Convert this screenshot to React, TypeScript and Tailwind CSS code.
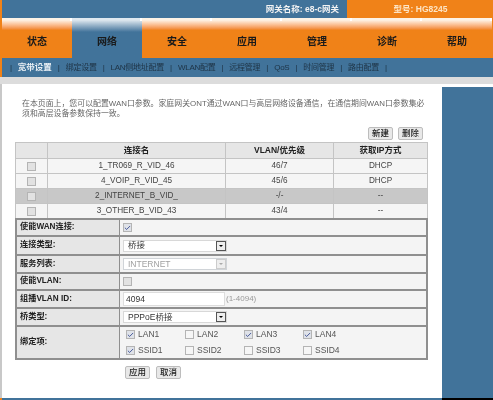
import { Check } from 'lucide-react';

const tabs = ['状态', '网络', '安全', '应用', '管理', '诊断', '帮助'];
const subTabs = ['宽带设置', '绑定设置', 'LAN侧地址配置', 'WLAN配置', '远程管理', 'QoS', '时间管理', '路由配置'];

const connections = [
  { name: '1_TR069_R_VID_46', vlan: '46/7', mode: 'DHCP' },
  { name: '4_VOIP_R_VID_45', vlan: '45/6', mode: 'DHCP' },
  { name: '2_INTERNET_B_VID_', vlan: '-/-', mode: '--', selected: true },
  { name: '3_OTHER_B_VID_43', vlan: '43/4', mode: '--' },
];

const bindings = [
  { label: 'LAN1', on: true },
  { label: 'LAN2', on: false },
  { label: 'LAN3', on: true },
  { label: 'LAN4', on: true },
  { label: 'SSID1', on: true },
  { label: 'SSID2', on: false },
  { label: 'SSID3', on: false },
  { label: 'SSID4', on: false },
];

function Box({ on, fill }: { on?: boolean; fill?: boolean }) {
  return (
    <span className={`flex h-[9px] w-[9px] shrink-0 items-center justify-center border border-[#b4b4b4] ${on ? 'bg-[#dfe2e8]' : fill ? 'bg-[#e2e2e2]' : 'bg-[#f6f6f6]'}`}>
      {on && <Check className="h-2 w-2 text-[#33478f]" strokeWidth={3} />}
    </span>
  );
}

function Btn({ label }: { label: string }) {
  return (
    <span className="flex h-[13px] w-[25px] items-center justify-center rounded-[2px] border border-[#bdbdbd] bg-[#e8e8e8] text-[8.5px] font-medium text-[#222222]">
      {label}
    </span>
  );
}

function Select({ value, disabled }: { value: string; disabled?: boolean }) {
  return (
    <div className={`flex h-3 w-[104px] items-center border bg-white pl-1 text-[8.5px] ${disabled ? 'border-[#d0d4d8] text-[#a0a0a0]' : 'border-[#d8d8d8] text-[#333333]'}`}>
      <span className="flex-1">{value}</span>
      <span className={`flex h-[10px] w-[10px] items-center justify-center border ${disabled ? 'border-[#cccccc]' : 'border-[#555555]'} bg-[#eeeeee]`}>
        <span className={`h-0 w-0 border-x-[2.5px] border-t-[2.5px] border-x-transparent ${disabled ? 'border-t-[#aaaaaa]' : 'border-t-black'}`} />
      </span>
    </div>
  );
}

function FormRow({ label, h, children }: { label: string; h: string; children: React.ReactNode }) {
  return (
    <div className={`flex ${h} border-b-2 border-[#8f8f8f]`}>
      <div className="flex w-[103px] shrink-0 items-center border-r border-[#8f8f8f] bg-[#e6e6e6] pl-[3px] text-[8.2px] font-bold text-[#222222]">
        {label}
      </div>
      <div className="flex flex-1 items-center bg-[#f4f4f4] pl-[3px]">{children}</div>
    </div>
  );
}

export default function App() {
  return (
    <div className="flex h-[400px] w-[493px] flex-col overflow-hidden bg-[#f08218] blur-[0.45px] [font-family:'Liberation_Sans','Noto_Sans_CJK_SC',sans-serif]">
      {/* top bar */}
      <div className="ml-[2px] flex h-[18px] shrink-0">
        <div className="w-[345px] bg-[#41739a] pr-2 text-right text-[8.5px] font-bold leading-[18px] text-[#f2f2f2]">
          网关名称: e8-c网关
        </div>
        <div className="flex-1 bg-[#f08218] pl-[1px] text-center text-[8.5px] font-bold leading-[18px] text-[#fde4c4]">
          型号: HG8245
        </div>
      </div>

      {/* main nav */}
      <div className="ml-[2px] flex h-[40px] shrink-0 bg-[#f08218]">
        {tabs.map((t, i) => (
          <div
            key={t}
            className={`relative flex w-[70px] items-center justify-center pt-[7px] text-[10px] font-bold text-[#1a1a1a] ${
              i === 1
                ? 'bg-linear-to-b from-[#dfe8ef] from-[2px] via-[#41739a] via-[14px] to-[#41739a]'
                : 'bg-linear-to-b from-[#fdf3e6] from-[2px] via-[#f08218] via-[12px] to-[#f08218]'
            }`}
          >
            {t}
            <span className="absolute right-0 top-0 h-[3px] w-[2px] bg-white" />
          </div>
        ))}
      </div>

      {/* sub nav */}
      <div className="ml-[2px] flex h-[19px] shrink-0 items-center bg-[#41739a] pl-[8px] text-[8px] tracking-[-0.25px] text-[#1e3345]">
        <span className="mr-[6px]">|</span>
        {subTabs.map((t, i) => (
          <span key={t} className="flex items-center">
            <span className={i === 0 ? 'text-[8.5px] font-bold tracking-normal text-[#e8eef3]' : ''}>{t}</span>
            <span className="mx-[6px]">|</span>
          </span>
        ))}
      </div>

      <div className="h-[7px] shrink-0 bg-[#dcdcdc]" />

      {/* content */}
      <div className="flex h-[314px] shrink-0 border-l-2 border-[#c8c8c8] bg-white">
        <div className="w-[440px] shrink-0 px-[13px] pt-[15px]">
          <p className="pl-[7px] text-[7.9px] leading-[10px] text-[#666666]">
            在本页面上，您可以配置WAN口参数。家庭网关ONT通过WAN口与高层网络设备通信，在通信期间WAN口参数集必须和高层设备参数保持一致。
          </p>
          <div className="mt-[8px] flex justify-end gap-[5px] pr-[6px]">
            <Btn label="新建" />
            <Btn label="删除" />
          </div>

          <div className="mt-[2px] w-[413px] border border-[#c4c4c4] text-center text-[8.2px] text-[#444444]">
            <div className="grid h-[15px] grid-cols-[32px_178px_108px_1fr] items-stretch bg-[#e6e6e6] text-[8.5px] font-bold leading-[15px] text-[#222222]">
              <span className="border-r border-[#c4c4c4]" />
              <span className="border-r border-[#c4c4c4]">连接名</span>
              <span className="border-r border-[#c4c4c4]">VLAN/优先级</span>
              <span>获取IP方式</span>
            </div>
            {connections.map((c) => (
              <div
                key={c.name}
                className={`grid h-[15px] grid-cols-[32px_178px_108px_1fr] border-t border-[#c4c4c4] leading-[13px] ${c.selected ? 'bg-[#c8c8c8]' : 'bg-[#f5f5f5]'}`}
              >
                <span className="flex items-center justify-center border-r border-[#c4c4c4]">
                  <Box fill />
                </span>
                <span className="border-r border-[#c4c4c4]">{c.name}</span>
                <span className="border-r border-[#c4c4c4]">{c.vlan}</span>
                <span>{c.mode}</span>
              </div>
            ))}
          </div>

          <div className="-mt-[1px] w-[413px] border-x-2 border-t-2 border-[#8f8f8f]">
            <FormRow label="使能WAN连接:" h="h-[17px]"><Box on /></FormRow>
            <FormRow label="连接类型:" h="h-[19px]"><Select value="桥接" /></FormRow>
            <FormRow label="服务列表:" h="h-[18px]"><Select value="INTERNET" disabled /></FormRow>
            <FormRow label="使能VLAN:" h="h-[17px]"><Box fill /></FormRow>
            <FormRow label="组播VLAN ID:" h="h-[18px]">
              <div className="flex h-[14px] w-[102px] items-center border border-[#dddddd] bg-white pl-[2px] text-[8.5px] text-[#333333]">4094</div>
              <span className="ml-[1px] text-[8px] text-[#999999]">(1-4094)</span>
            </FormRow>
            <FormRow label="桥类型:" h="h-[18px]"><Select value="PPPoE桥接" /></FormRow>
            <div className="flex h-[33px] border-b-2 border-[#8f8f8f]">
              <div className="flex w-[103px] shrink-0 items-center border-r border-[#8f8f8f] bg-[#e6e6e6] pl-[3px] text-[8.2px] font-bold text-[#222222]">
                绑定项:
              </div>
              <div className="grid flex-1 grid-cols-[59px_59px_59px_59px] content-center gap-y-[7px] bg-[#f4f4f4] pl-[6px] text-[8.5px] leading-[9px] text-[#555555]">
                {bindings.map((b) => (
                  <span key={b.label} className="flex items-center gap-[3px]">
                    <Box on={b.on} />
                    {b.label}
                  </span>
                ))}
              </div>
            </div>
          </div>

          <div className="mt-[6px] flex gap-[6px] pl-[110px]">
            <Btn label="应用" />
            <Btn label="取消" />
          </div>
        </div>
        <div className="mt-[3px] flex-1 bg-[#41739a]" />
      </div>

      <div className="ml-[2px] flex flex-1">
        <div className="w-[440px] bg-[#41739a]" />
        <div className="flex-1 bg-black" />
      </div>
    </div>
  );
}
